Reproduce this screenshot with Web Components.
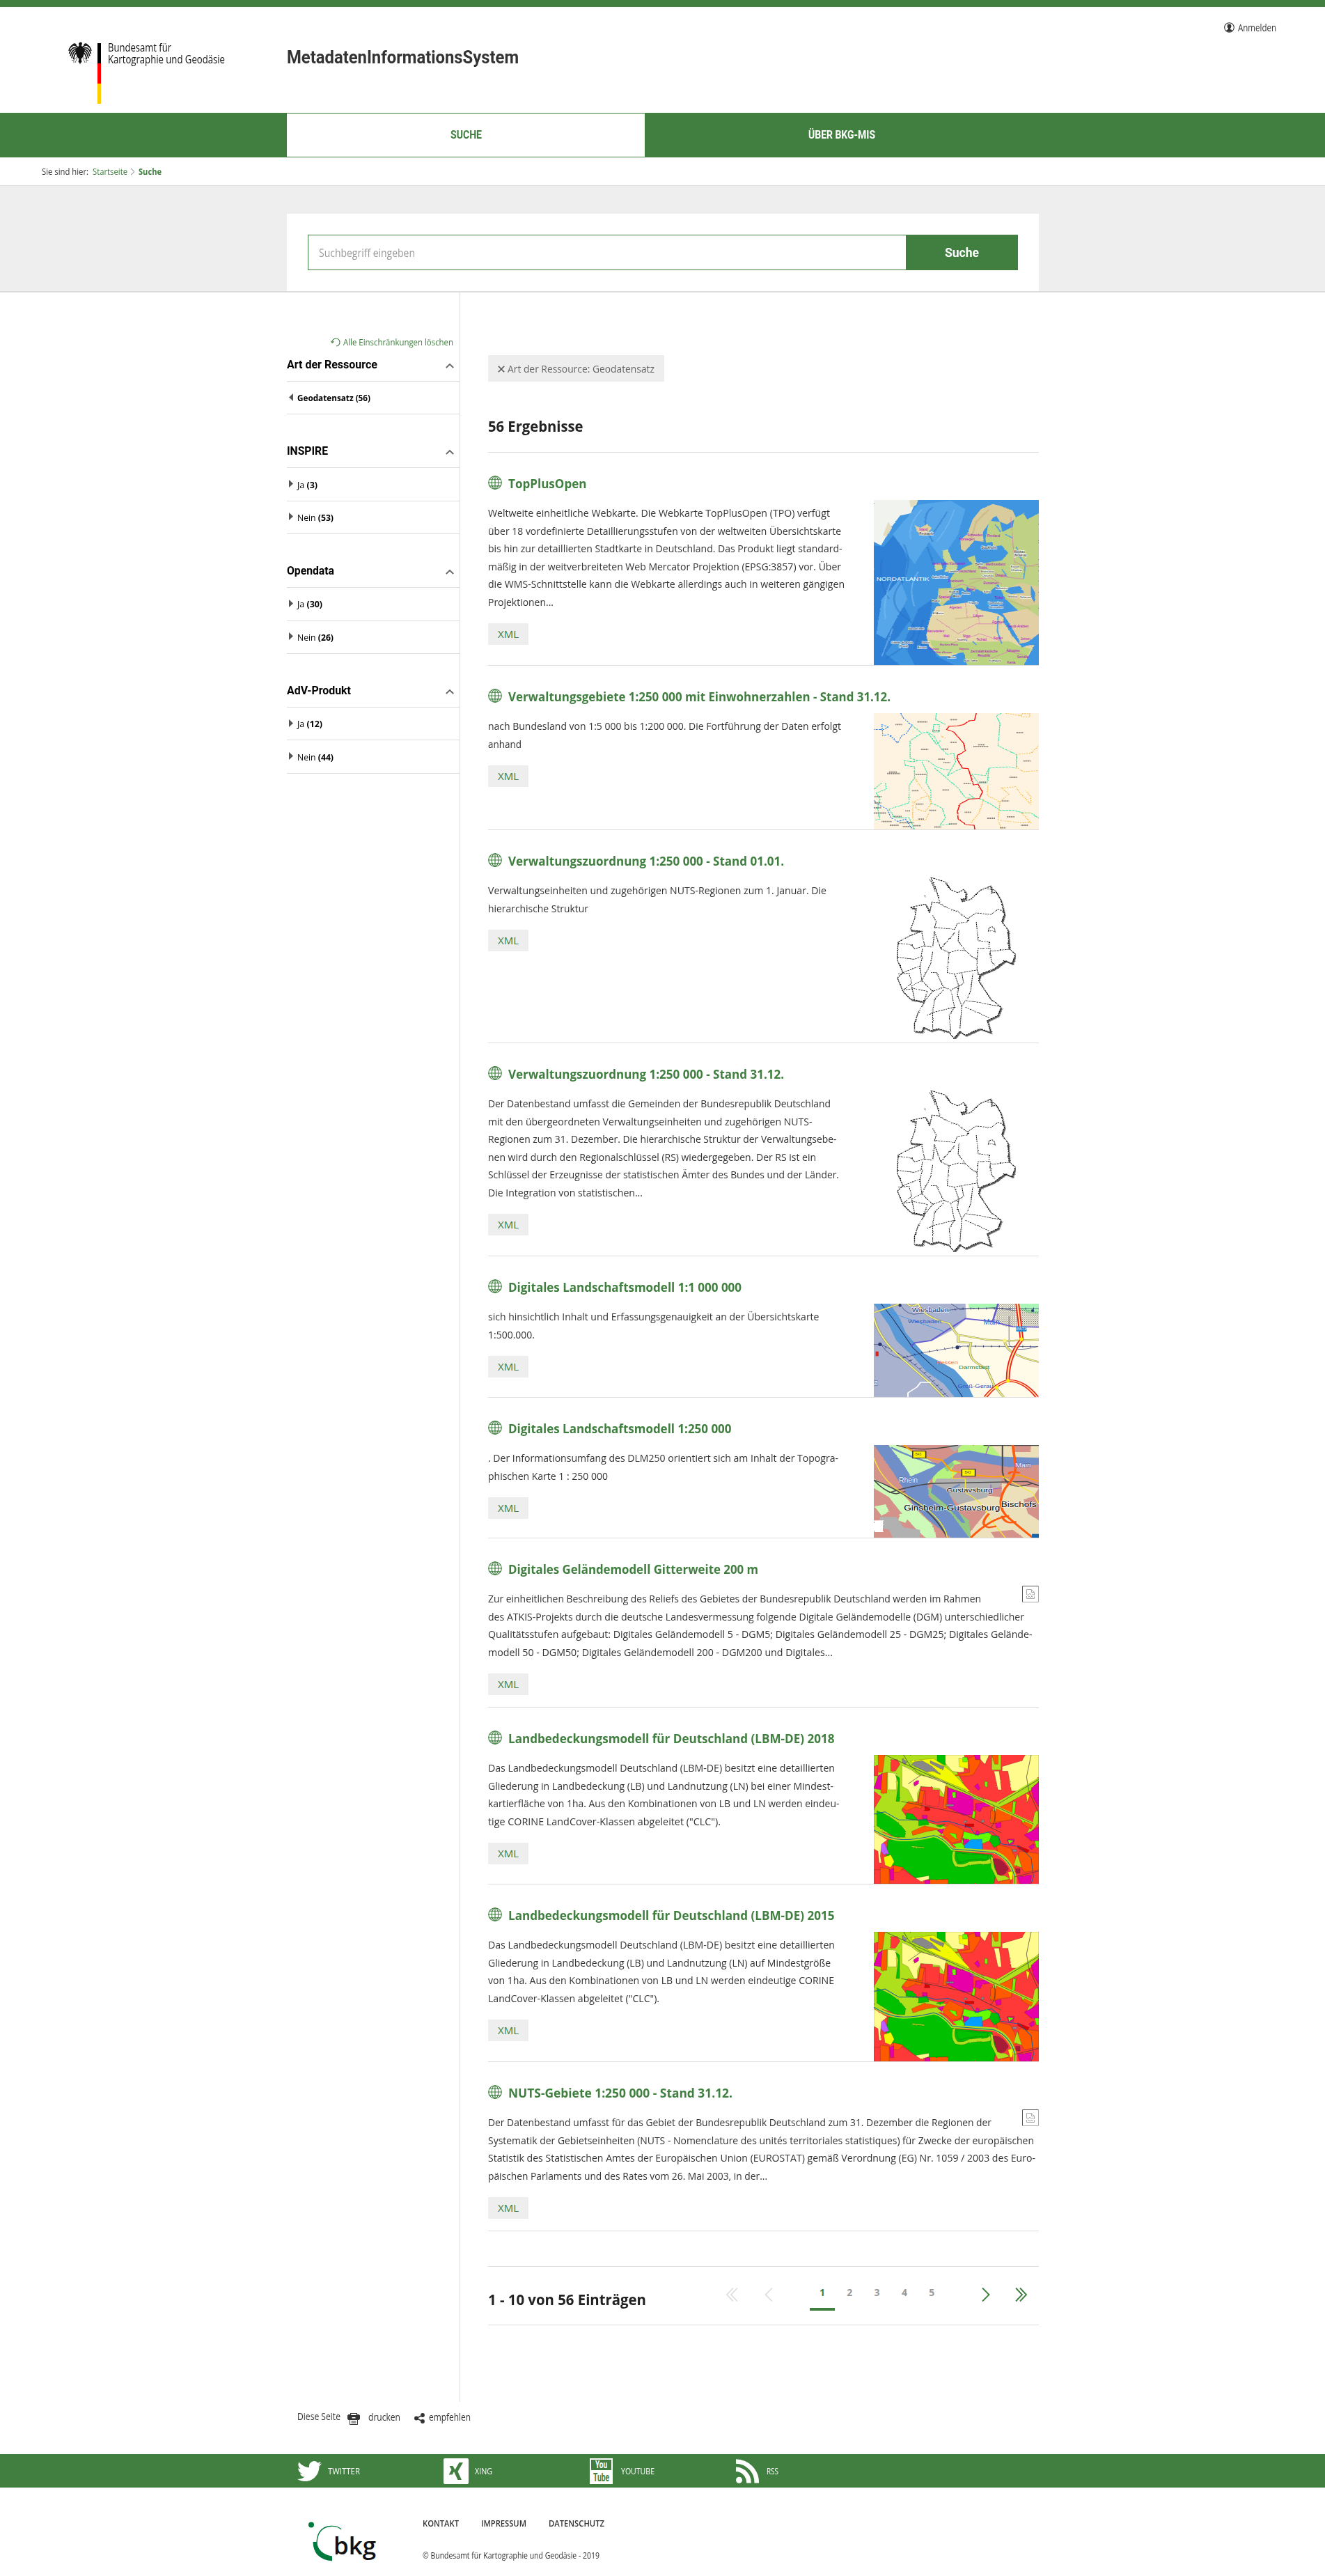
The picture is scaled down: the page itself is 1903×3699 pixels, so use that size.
<!DOCTYPE html>
<html lang="de">
<head>
<meta charset="utf-8">
<title>MetadatenInformationsSystem</title>
<style>
html,body{margin:0;background:#fff}
body{font-family:"Open Sans","Noto Sans",sans-serif;font-size:15px;color:#333;--green:#407f40;--line:#ddd}
</style>
</head>
<body>
<mis-page></mis-page>
<script>
const define = (name, html, init) => {
  const t = document.createElement('template');
  t.innerHTML = html;
  customElements.define(name, class extends HTMLElement {
    connectedCallback() {
      if (this.shadowRoot) return;
      const r = this.attachShadow({mode: 'open'});
      r.append(t.content.cloneNode(true));
      if (init) init(this, r);
    }
  });
};

/* ---------- map thumbnails ---------- */
const germany = `<g fill="#fff" stroke="#111" stroke-width="2.6" stroke-dasharray="5 2.2" filter="url(#rough)">
<path filter="url(#sh)" d="M1235 133L1275 150 1290 180 1310 190 1325 178 1332 192 1330 212 1318 214 1322 224 1345 215 1370 182 1400 165 1402 192 1415 188 1428 220 1437 270 1430 300 1447 330 1450 400 1467 420 1459 457 1440 445 1410 475 1370 497 1366 520 1380 550 1400 590 1428 620 1420 650 1390 670 1400 715 1370 700 1330 725 1315 710 1298 737 1285 712 1255 700 1235 708 1215 695 1210 712 1190 710 1190 680 1200 640 1218 600 1180 590 1158 560 1143 510 1158 490 1142 440 1145 375 1180 350 1210 335 1178 330 1190 290 1195 250 1178 245 1220 233 1232 262 1238 225 1260 228 1250 180Z"/>
<g fill="none" stroke-width="2"><path d="M1255 228L1285 250 1310 262 1335 288 1360 266 1400 272 1420 252 1437 262M1240 275L1250 300 1245 320 1300 328 1308 305 1335 300 1340 288M1360 300L1365 370 1395 375 1395 398 1365 400 1362 440 1350 432 1330 408 1310 372 1312 330M1210 340L1218 390 1240 395 1245 335 1262 400 1285 365 1300 340M1145 380L1180 385 1190 400 1220 390M1142 432L1190 440 1208 430 1212 400M1158 490L1205 465 1212 430M1262 400L1285 415 1310 405 1330 408M1240 412L1235 455 1210 520 1240 560 1270 545 1250 490 1235 490M1285 415L1280 490 1300 495 1320 490 1362 480 1362 440M1362 480L1368 500M1395 398L1402 410 1450 402M1398 410L1402 450 1412 465M1300 495L1312 540 1290 555 1270 545M1320 490L1325 530 1312 540 1308 575 1320 615 1330 595 1360 600 1428 618M1350 495L1345 555 1335 590M1240 560L1215 602M1270 555L1245 590 1240 640 1225 650M1290 555L1300 620 1240 640 1240 700M1300 620L1285 650 1290 712M1320 615L1315 700M1330 620L1365 640 1395 660M1145 495L1175 492 1182 530 1160 555 1188 550 1225 560 1215 602M1205 465L1210 520 1182 540 1190 590M1393 335L1395 322 1403 317 1410 325 1412 337 1402 333ZM1275 155L1290 180M1232 140L1240 160 1248 190M1390 175L1410 180 1420 200M1218 200L1220 208"/></g></g>`;
const MAPS = {
top: {h: 237, sy: .357, y0: 162, svg: `<rect x="1078" y="162" width="454" height="664" fill="#3f95e0"/>
<g filter="url(#rough)">
<path fill="#2f7fd6" d="M1078 345L1105 350 1140 290 1170 400 1150 560 1180 640 1110 780 1150 826H1078ZM1200 600L1240 560 1225 700 1250 790 1300 826H1190L1160 740Z"/><path fill="#56a6ea" d="M1130 300L1200 180 1290 165 1330 200 1310 300 1265 400 1230 330 1190 420ZM1100 560L1150 480 1170 560 1110 720 1085 700Z"/>
<path fill="none" stroke="#2a74c8" stroke-width="5" opacity=".5" d="M1160 340Q1190 420 1150 500T1170 640 1110 800M1240 190Q1200 230 1240 330M1280 210l-40 90M1225 350l15 60M1100 400q-10 100 20 160M1215 640l-25 120"/><path fill="none" stroke="#7dbdf0" stroke-width="4" opacity=".6" d="M1210 200q-40 60-30 120M1300 200q-20 80-50 130M1130 480q-30 80-20 160M1200 450q-30 60-10 140M1130 680l-30 110"/>
<path fill="#f1f3ef" d="M1078 162H1195L1180 215 1150 225 1125 275 1098 345 1078 330Z"/><path fill="#e3dcbf" d="M1175 162h25l-5 20-15 10ZM1118 250l10 25-15 35-10-5 8-30Z"/>
<path fill="#dccfa0" d="M1190 262L1205 275 1225 258 1237 275 1230 290 1212 302 1198 290Z"/>
<path fill="#d8cc9c" d="M1318 360L1316 320 1335 300 1350 240 1372 200 1405 178 1425 185 1460 205 1470 235 1445 260 1425 250 1415 225 1405 235 1378 290 1380 330 1355 325 1340 350 1328 370Z"/>
<path fill="#bed184" d="M1532 162V630L1500 640 1440 560 1420 500 1390 540 1360 520 1345 545 1320 515 1300 520 1285 560 1265 590 1252 570 1256 518 1292 515 1288 480 1300 455 1330 430 1350 420 1335 395 1355 385 1362 420 1430 405 1448 375 1430 345 1390 350 1385 320 1395 245 1425 250 1432 290 1460 270 1465 235 1490 215 1500 240 1532 215Z"/>
<path fill="#c9d792" d="M1268 365L1282 360 1292 400 1310 425 1305 445 1272 452 1280 420 1268 395ZM1245 420l18-6 4 25-20 10Z"/>
<path fill="#e5d7a8" d="M1250 590L1350 572 1362 600 1420 620 1440 640 1455 700 1480 745 1520 745 1490 826H1335L1325 770 1290 790 1260 790 1230 750 1222 705 1232 640Z"/><path fill="#b9d37e" d="M1228 725L1330 735 1450 730 1478 750 1510 760 1490 826H1335L1325 775 1255 785Z"/><path fill="#e2cfa4" d="M1432 618L1500 600 1532 630V700L1500 735 1482 742 1445 665Z"/><path fill="#d9cb98" d="M1440 520l40-25 52 15v70l-40 10-40-35ZM1260 525l30 0-5 40-20 10Z"/>
<path fill="#3f95e0" d="M1446 515L1480 508 1492 535 1455 540 1440 530ZM1510 505l12 30-2 40-10-25ZM1435 625l10 20 35 85-5 5-40-80ZM1378 338l25-8 4 15-22 15ZM1480 740l50-15v10l-45 20ZM1335 510l25 30 12 30-8 10-18-30-15-25ZM1395 545l20 40 25 10-8 25-60-15 12-30Z"/>
<path fill="none" stroke="#57a6df" stroke-width="4" d="M1440 300l20 15M1412 260l15 30M1470 350l10 40 15 30-5 60M1430 440l15 30M1350 730l10 15M1420 630l-2 60 12 50"/><path fill="none" stroke="#d874b7" stroke-width="1.6" d="M1250 640L1310 700 1360 660 1430 660M1330 575l5 60M1360 600l10 60M1290 520l30-20 40 15M1340 480l60-5 30 25M1380 430l50 40 60 10M1455 230l10 180 30 20 37-10M1290 740l80-40 60 30M1400 800l50-30 50 20"/>
<path fill="none" stroke="#c4b27e" stroke-width="5" opacity=".6" d="M1345 320l15-70 35-50M1340 500l40-20M1440 560l70 40M1300 640l70-10M1460 420l60 10M1270 560l30-20"/></g>`,
labels: [[1085,486,'NORDATLANTIK','#fff',7.2,76],[1203,284,'Island','#b000c8',4.5],[1203,303,'Reykjavík','#222',4.5],[1335,307,'Schweden','#b000c8',4.8],[1313,323,'Norwegen','#b000c8',4.8],[1390,311,'Finnland','#b000c8',4.8],[1373,357,'Stockholm','#222',4.8],[1463,374,'Moskau','#222',4.5],[1463,388,'(Moskva)','#222',4.5],[1238,422,'Vereinigtes Königreich','#b000c8',4.6,48],[1357,426,'Berlin','#222',4.6],[1386,426,'Weißrussland','#b000c8',4.6],[1366,440,'Polen','#b000c8',4.6],[1310,453,'Deutschland','#b000c8',4.6],[1372,453,'Bratislava','#222',4.4],[1283,453,'London','#222',4.4],[1238,476,'Saint Helier','#222',4.4],[1283,493,'Frankreich','#b000c8',4.6],[1375,469,'Chișinău','#222',4.4],[1412,469,'Ukraine','#b000c8',4.6],[1380,500,'Rumänien','#b000c8',4.6],[1334,526,'Italien','#b000c8',4.6],[1256,557,'Spanien','#b000c8',4.6],[1284,535,'Madrid','#222',4.4],[1296,551,'Algier','#222',4.4],[1320,541,'Roma','#222',4.4],[1413,520,'Bukarest','#222',4.4],[1380,535,'Sofia','#222',4.4],[1410,559,'Türkei','#b000c8',4.6],[1446,555,'Nikosia','#222',4.4],[1480,558,'Teheran','#222',4.4],[1455,434,'Kasan','#222',4.4],[1455,448,'Charkiw','#222',4.4],[1392,579,'Damaskus','#222',4.4],[1395,595,'Jerusalem','#222',4.4],[1338,579,'Tripolis','#222',4.4],[1238,571,'Rabat','#222',4.4],[1286,600,'Algerien','#b000c8',4.8],[1352,633,'Libyen','#b000c8',4.8],[1240,622,'El Aaiún','#222',4.4],[1403,657,'Ägypten','#b000c8',4.8],[1446,675,'Saudi-Arabien','#b000c8',4.8],[1173,684,'Nouakchott','#222',4.4],[1223,695,'Mauretanien','#b000c8',4.6],[1270,713,'Mali','#b000c8',4.6],[1323,713,'Niger','#b000c8',4.6],[1360,727,'Tschad','#b000c8',4.6],[1407,722,'Sudan','#b000c8',4.6],[1482,724,'Jemen','#b000c8',4.6],[1307,729,'Niamey','#222',4.4],[1125,738,'Cidade da Praia','#222',4.4],[1210,738,'Dakar','#222',4.4],[1147,754,'(Praia)','#222',4.4],[1198,758,'Bissau','#222',4.4],[1260,748,'Burkina Faso','#b000c8',4.4],[1230,763,'Guinea','#b000c8',4.4],[1245,778,"Côte d’Ivoire",'#b000c8',4.4],[1313,765,'Nigeria','#b000c8',4.4],[1344,776,'Zentralafrikanische','#b000c8',4.6,39],[1364,793,'Republik','#b000c8',4.6],[1443,772,'Äthiopien','#b000c8',4.6],[1472,797,'Somalia','#b000c8',4.6],[1282,798,'Accra','#222',4.4],[1326,811,'São Tomé','#222',4.4],[1395,811,'Kampala','#222',4.4],[1445,820,'Kenia','#b000c8',4.6]]},
vg: {h: 167, sy: .357, y0: 1019, svg: `<rect x="1078" y="1019" width="454" height="468" fill="#fef3e0"/><g fill="none" filter="url(#rough)">
<path stroke="#2a7de6" stroke-width="2.5" stroke-dasharray="6 3" d="M1152 1019L1160 1040 1183 1068 1168 1100 1155 1110 1143 1138 1120 1105 1103 1110 1100 1065 1118 1075 1105 1085 1078 1085M1078 1370L1088 1385 1115 1405 1125 1440 1145 1455 1165 1445 1185 1487"/>
<path stroke="#3fe2b0" stroke-width="2.6" stroke-dasharray="7 2" d="M1183 1068L1210 1100 1225 1095 1243 1110 1262 1160 1280 1185 1298 1180 1303 1215 1290 1248 1270 1245 1250 1235 1225 1208 1200 1210 1178 1200 1178 1130 1210 1100M1243 1065H1258V1095H1240ZM1200 1210L1185 1215 1162 1210 1165 1230 1190 1235 1190 1280 1175 1310 1175 1380 1120 1405 1135 1440 1175 1440 1190 1487M1210 1215L1225 1260 1222 1300 1235 1330 1235 1380 1265 1400 1275 1440 1260 1470 1290 1465M1245 1240L1270 1270 1285 1290 1310 1320 1330 1360 1355 1362 1340 1345M1290 1248L1280 1270 1320 1240M1365 1300L1348 1265 1385 1270 1395 1240 1450 1235 1470 1240 1470 1185 1440 1165 1420 1150 1425 1060 1415 1030 1430 1019M1250 1019L1248 1045 1275 1065M1368 1362L1400 1385 1425 1410 1460 1410 1490 1420 1510 1420 1532 1442M1110 1300L1112 1325 1085 1340 1095 1365 1088 1400 1095 1445 1080 1450M1078 1325L1100 1300M1395 1240L1390 1300 1365 1300M1225 1095L1250 1145 1262 1130"/>
<path stroke="#f4b942" stroke-width="2.5" stroke-dasharray="4 3" d="M1190 1280L1210 1320 1228 1350 1210 1360 1190 1375 1195 1405 1220 1415 1235 1385 1228 1350M1185 1375L1185 1450 1220 1450 1230 1420M1470 1185L1510 1180 1532 1150M1470 1235L1490 1255 1532 1250M1392 1310L1390 1350 1425 1375 1450 1345 1430 1320 1468 1315 1480 1340 1510 1385 1510 1355 1495 1330M1380 1365L1368 1420 1345 1460M1425 1375L1420 1450 1430 1487M1425 1450L1480 1460 1510 1460 1485 1420 1510 1420M1440 1019L1485 1030M1485 1021h22v13h-22zM1275 1120L1262 1110"/>
<path stroke="#f01818" stroke-width="3" d="M1360 1019L1355 1048 1340 1050 1325 1065 1310 1070 1285 1072 1278 1085 1298 1095 1310 1115 1325 1140 1330 1170 1308 1190 1308 1205 1322 1240 1338 1242 1345 1275 1352 1308 1365 1305 1377 1337 1368 1362 1340 1365 1315 1385 1308 1415 1310 1445 1332 1468 1354 1470 1356 1487"/></g>
<g fill="none" stroke="#333" stroke-width="5" stroke-dasharray="1.5 1.3" opacity=".8"><path d="M1138 1065h18M1198 1054h28M1288 1045h20M1240 1090h20M1288 1136h18M1208 1165h20M1265 1164h18M1255 1204h18M1270 1218h18M1365 1146h18M1352 1153h42M1470 1098h20M1490 1211h20M1120 1256h22M1115 1262h36M1193 1266h30M1325 1302h20M1368 1297h20M1183 1331h18M1267 1328h18M1452 1277h20M1195 1385h20M1430 1372h20M1165 1412h14M1230 1410h20M1328 1418h18M1390 1442h22M1444 1436h22M1078 1400h20M1078 1421h34M1133 1435h22M1100 1455h28M1122 1470h24M1148 1460h40M1158 1475h22M1200 1445h16M1186 1472h22M1245 1477h18M1285 1465h22M1483 1470h20M1425 1480h16M1080 1355h20M1080 1380h18"/></g>`, labels: []},
de: {h: 237, sy: .3827, y0: 133, svg: germany, labels: []},
dlm1000: {h: 134, sy: .3333, y0: 186, svg: `<rect x="1078" y="186" width="454" height="402" fill="#fffbe8"/><path fill="#a9b3cf" d="M1078 186H1330L1333 250 1300 295 1240 345 1185 357 1250 460 1350 588H1078Z"/><path fill="#a8f5b6" d="M1338 186H1532V270L1490 215 1415 210 1395 205 1340 205Z"/><path fill="#fffbe8" d="M1415 186H1468L1475 220 1532 230V290H1440L1412 265Z"/><path fill="url(#dots)" d="M1415 186H1468L1475 205 1532 220V285H1440L1412 265Z"/>
<path fill="#5899d6" d="M1078 186H1122L1150 250 1165 310 1215 400 1265 440 1300 470 1335 530 1352 588H1300L1270 530 1220 475 1190 420 1140 345 1120 280Z"/>
<g fill="none"><path stroke="#202a55" stroke-width="2" d="M1098 186L1130 250 1185 375 1250 470 1290 510 1322 588"/><path stroke="#3d94ec" stroke-width="2" d="M1125 225L1270 305M1130 230L1140 222"/><path stroke="#6158d0" stroke-width="5" d="M1180 370L1190 355 1235 345 1290 290 1330 250 1400 262 1460 285 1532 287M1405 262L1420 186"/>
<path stroke="#26316d" stroke-width="1.5" d="M1078 362h20q30 20 70 60 50 60 115 166M1098 362q20 50 55 60l60-25 110-28 206 2M1150 190q20 50 50 40l80-15 40-8h212M1290 186l25 25 40-5M1350 208l60-5 65 15M1450 240v120q10 40 80 10"/><path stroke="#26316d" stroke-width="9" stroke-dasharray="1.6 20" d="M1150 422l60-25 110-28 206 2M1280 215l40-8h212M1180 430q50 60 100 158M1110 375q30 20 70 60"/>
<g stroke="#8d8f74" stroke-width="7"><path d="M1078 225L1150 186M1078 245Q1090 330 1150 415L1230 525 1270 588M1170 186q10 20 30 0q15 60 85 85l22 48 80 22 60 5 85-5M1310 320v30l35 5q-10 60 15 85l30 30 20 70 25 48M1438 345q0 60 94 92"/></g><g stroke="#f5f17e" stroke-width="4"><path d="M1078 225L1150 186M1078 245Q1090 330 1150 415L1230 525 1270 588M1170 186q10 20 30 0q15 60 85 85l22 48 80 22 60 5 85-5M1310 320v30l35 5q-10 60 15 85l30 30 20 70 25 48M1438 345q0 60 94 92"/></g><path stroke="#fff" stroke-width="4" d="M1235 525h-28l-10 20-25 25v18"/>
<path stroke="#f11b1b" stroke-width="11" d="M1473 186L1485 340Q1445 420 1447 518Q1415 530 1385 588M1447 518Q1490 515 1527 588"/><path stroke="#ffe99c" stroke-width="4" d="M1473 186L1485 340Q1445 420 1447 518Q1415 530 1385 588M1447 518Q1490 515 1527 588"/></g>
<g fill="#fff200"><ellipse cx="1484" cy="339" rx="5" ry="8"/><ellipse cx="1447" cy="518" rx="5" ry="8"/><ellipse cx="1416" cy="547" rx="5" ry="8"/><ellipse cx="1438" cy="345" rx="5" ry="8" fill="#f8f27c"/></g><g fill="#2b376f"><ellipse cx="1150" cy="193" rx="4" ry="7"/><ellipse cx="1095" cy="361" rx="5" ry="8"/><ellipse cx="1308" cy="374" rx="5" ry="8"/><ellipse cx="1515" cy="216" rx="4" ry="6"/></g><rect x="1470" y="284" width="28" height="22" fill="#159af0"/><path fill="#d22" d="M1083 392h8v20h-8z"/>`,
labels: [[1183,223,'Wiesbaden','#26316d',8.8,53,1],[1172,269,'Wiesbaden','#2c55c4',8,48],[1380,277,'Main','#3465d6',10,23],[1471,301,'A671','#fff',5.5,14],[1250,448,'Hessen','#ee7a4b',7.6,31],[1312,468,'Darmstadt','#2a7f3c',7.6,44],[1309,549,'Groß-Gerau','#3a50c0',7.4,51],[1078,536,'Z','#fff',9]]},
dlm250: {h: 133, sy: .3333, y0: 795, svg: `<rect x="1078" y="795" width="454" height="399" fill="#d4928a"/><g filter="url(#rough)">
<path fill="#cdfab8" d="M1090 795H1150L1230 860 1250 880 1230 960 1180 940 1130 850ZM1078 940L1130 980 1160 1010 1200 1080 1240 1140 1250 1194H1220L1190 1150 1150 1080 1120 1020 1078 980ZM1080 1060l30-10 10 30-20 20ZM1150 1090l25 10-10 30-20-10Z"/><path fill="#b7f47f" d="M1310 795H1425L1430 850 1360 830 1310 830ZM1240 905L1300 860 1330 880 1290 940 1320 960 1240 960Z"/>
<path fill="#ece0ba" d="M1400 795H1532V850L1430 850ZM1300 1060L1380 1010 1430 1020 1430 960 1532 980 1500 1060 1532 1090V1194H1330L1390 1080Z"/>
<path fill="#b1b1b1" d="M1250 940L1430 940 1425 975 1400 985 1390 1020 1310 1050 1285 1010 1260 1000 1245 960ZM1280 795H1320L1300 825ZM1095 1105H1140L1160 1150 1205 1160V1194H1130L1120 1160 1090 1150Z"/>
<path fill="#d4928a" d="M1155 800L1270 800 1270 830 1250 870 1220 850ZM1300 880L1350 865 1430 870 1430 935 1360 925 1290 905ZM1460 795h50v30h-50zM1450 880L1532 900V960L1445 930ZM1490 1030l42-20v110l-30-30ZM1400 1170l60-10 30 34h-80ZM1330 1070l50 10-40 50Z"/>
<path fill="#fff" d="M1078 1120h25v50h-25zM1150 940h20v12h-20z"/><path fill="#92c883" d="M1210 970L1270 1000 1300 1070 1340 1120 1345 1194H1325L1290 1100 1240 1030ZM1290 860l10 20-20 30-10-20Z"/>
<path fill="#6f8fc9" d="M1078 795H1118L1160 880 1180 930 1240 890 1300 830 1340 818 1430 845 1532 850V880L1450 890 1340 862 1300 860 1255 910 1225 960 1230 1020 1290 1090 1340 1194H1290L1230 1120 1190 1060 1150 960 1130 910ZM1240 960L1280 990 1310 1080 1330 1130 1320 1130 1275 1050 1235 1000Z"/></g>
<g fill="none"><path stroke="#6f8fc9" stroke-width="7" d="M1125 805Q1180 850 1255 880M1315 965Q1250 1010 1300 1080"/><path stroke="#484848" stroke-width="4" d="M1120 1000Q1180 970 1240 960L1500 952 1532 970M1078 945Q1150 990 1190 1040 1250 1100 1280 1194M1078 945Q1110 1000 1140 1005L1165 995M1140 795Q1200 830 1310 795M1380 797h152M1432 795V910Q1440 1000 1515 960"/><path stroke="#f2e83a" stroke-width="3" d="M1078 850Q1100 950 1160 1005 1270 1100 1280 1194M1330 940V1000Q1380 1040 1395 1110L1440 1194M1430 930Q1500 990 1515 1000L1532 1050M1295 905v35h35"/><path stroke="#ffa500" stroke-width="5" d="M1160 795L1200 840 1265 860 1290 905Q1370 930 1410 932L1480 925 1532 952"/><path stroke="#ff5a0d" stroke-width="7" d="M1460 795L1468 880Q1470 930 1440 980 1410 1060 1450 1110L1480 1150 1515 1194M1345 1194Q1400 1110 1450 1100M1430 1100q10 40 40 25M1395 1090q-30 50 0 60l20-5M1450 920q0-15 30-5"/><path stroke="#9b69be" stroke-width="3" d="M1395 795l-10 45M1400 965v20l30-5"/></g><path fill="#fff300" stroke="#333" stroke-width="3" d="M1185 821h36v30h-36zM1320 899h37v30h-37z"/><path fill="#1565ac" d="M1513 1178h19v16h-19z"/>`,
labels: [[1192,841,'B43','#553',5],[1328,919,'B43','#553',5],[1468,892,'Main','#fff',9.5,22],[1147,957,'Rhein','#fff',10,27],[1278,998,'Gustavsburg','#111',9.5,66,1],[1161,1077,'Ginsheim-Gustavsburg','#000',10.8,138,1],[1428,1061,'Bischofs','#000',10.8,51,1]]},
lbm: {h: 185, sx: .3333, sy: .3333, x0: 12, y0: 15, svg: `<rect x="12" y="15" width="711" height="555" fill="#ff3838"/>
<g filter="url(#fine)" stroke="#222" stroke-opacity=".55" stroke-width="1.3">
<path fill="#aee01e" d="M12 15H330L420 180 540 220 720 118V150L560 240 525 310 512 300 530 235 400 180 330 155 325 200 290 190 215 150 200 215 130 250 160 290 240 305 350 330 330 370 300 360 150 380 12 335V250L45 195 12 170ZM520 15H560V80H520ZM705 262l15-10v60l-40 45-8-5 25-50Z"/>
<path fill="#fffb8c" d="M133 60L175 80 200 100 300 120 325 135 315 190 295 160 215 150 200 180 200 215 185 215 160 165 133 150ZM72 90L110 95V165H72ZM290 15H403L400 88 380 90 350 85ZM565 65L650 40 665 15H723V110L650 170H605L590 85 565 85ZM465 15h45l-20 40-18-20ZM530 85h22l10 80h-15Z"/>
<path fill="#ff3838" d="M215 153h50v12h30v50l-5 25-55-10v-60h-20ZM85 35h28l12 20-20 30h-20ZM12 60h18v45h-18Z"/>
<path fill="#ff5a00" d="M30 15H60L50 90H32ZM45 95L70 90 68 180 42 180ZM135 245L160 215 220 225 215 245 190 240 155 255ZM345 105L425 90 420 30 455 15H470V50L440 100 420 105ZM320 150h10l-5 95h-15ZM210 170h20l-10 55h-15ZM540 245L610 215 605 295 530 305ZM650 300L700 310 690 335 650 310ZM305 345L340 310 400 340 385 385 350 395 315 365ZM175 345L230 320 300 335 240 345 180 362ZM540 400L600 415 640 490 615 500 570 460 545 430ZM640 430L723 440V510L660 520 630 470ZM435 255h15v32h-18ZM520 15h28v40h-15ZM515 255h20v55h-20Z"/>
<path fill="#e700a8" d="M30 105L48 95 42 165 12 160ZM330 155L440 195 440 270 400 275 330 240ZM445 150l15-12 10 20-8 10ZM445 15h25v20h-20ZM183 135l18-12 5 15-18 12ZM690 160L723 130V240L700 200ZM450 225L500 220 512 235 480 240 470 260 450 250ZM535 310l25-5v22l-20 3ZM285 340l30-8-10 25ZM660 360L723 325V390L690 385ZM588 378h30l-5 20-20 5ZM680 410l20-12 5 15-15 10ZM220 275h22v15h-20Z"/>
<path fill="#00c000" d="M25 255Q90 280 130 320L150 345 145 370 100 368 25 320ZM72 380Q180 385 280 362 330 400 360 430L520 445 540 500 530 570H330L250 552 190 545 140 505 90 490 65 450 70 410ZM285 15h35v45l-35-20ZM105 100l18 15v100h-15l10-80ZM510 360l40 5 5 35-25 15-20-30ZM205 295l35-5 10 25-45 5ZM280 320l40-8-20 15ZM150 265l30 5 20 25-50-5Z"/>
<path fill="#aee01e" d="M352 430h12q-10 30 8 55 30 5 50-10l50-5q30 5 40-10l10 20q-30 10-50 5l-50 5q-30 15-60 5-20-25-10-65ZM175 407l55 6v5l-55-6ZM615 490l15-50 20 60ZM515 450l12 10q0 60 30 75l20 0 25 15-55 10-30-60Z"/><path fill="#00c000" d="M366 438L505 448 500 466 470 464 420 468 378 480Z"/>
<path fill="#f2f900" d="M170 40L270 30 345 85 430 175 300 120 250 95 180 50ZM55 455L85 445 100 475 85 500 60 490ZM378 30l40 5v40l-38-10ZM590 520l20-5v35l-10 5ZM668 180l15 10-10 30Z"/>
<path fill="#888" d="M185 45L220 40 265 65 300 100 265 85 240 88 175 58ZM255 40l60 25-5 15-55-30ZM135 30l20 15-8 12-12-10ZM425 205l25-12 35 10-5 12-40-12ZM322 228h35v8h-35ZM402 296l12 3-4 8h-10ZM475 295h12v10h-12ZM610 422h18v10h-18Z"/>
<path fill="#66ff00" d="M395 25h20v20h-20zM440 255l10 5-5 30-10-5ZM612 215h12l-5 50-12 5ZM350 175h15v25h-15ZM400 345l60 15 40-15 20 15-10 25-50 20-70-10ZM335 350l30 5 5 25-20-15ZM490 130h12v25l-12-5ZM705 385h18v30h-10ZM350 400l40-8 15 20-20 15ZM590 380l25 5-20 15ZM640 280l25 15-10 15Z"/>
<path fill="#e700a8" d="M395 375l28 5-5 17h-20ZM455 340l12 5-5 18-12-8Z"/>
<path fill="#ff3838" d="M12 510H140L190 545 250 555 330 550V570H12Z"/><path fill="#ff5a00" d="M40 500L78 505V570H40ZM97 490L140 500 120 520 97 520ZM250 552H333V570H255ZM550 565l50-15v20h-50Z"/><path fill="#e700a8" d="M80 510l18-6v50h-15ZM632 540l60-8-5 38h-45ZM232 555h22v15h-22Z"/>
<path fill="#009fff" d="M400 405L430 380 478 378 480 422 405 420Z"/><path fill="#a61c39" d="M525 465Q560 450 592 505 580 540 545 530ZM622 505h20v20h-15Z"/><path fill="#be5cff" d="M45 388L60 400 78 440 55 445 38 425Z"/><path fill="#e10000" d="M405 312h38v12h-38zM632 405l50 20-8 12-42-20ZM232 238l20 5v12h-20Z"/><path fill="#fffb8c" d="M12 345L70 380 45 400 40 450 45 480 35 480 30 430 12 420ZM192 545l58-10v15l-35 10Z"/></g>
<g fill="none"><path stroke="#aee01e" stroke-width="14" d="M12 335Q80 380 140 380T270 362Q310 370 350 420L530 432Q600 460 620 540V570"/><path stroke="#135da0" stroke-width="3" d="M12 338Q80 380 140 380T270 362Q310 370 350 420L530 435Q600 460 620 540V570M12 270L60 260 120 295 240 295 280 305 330 300 400 320 430 330 450 360 520 345 550 370 560 398 640 410 690 460 700 540 690 570"/><path stroke="#aee01e" stroke-width="11" d="M400 170L530 235 700 312M540 228L723 118"/><path stroke="#333" stroke-width="2" d="M60 15L160 60 430 185 540 238 700 312M140 15Q180 90 230 105T330 140M690 15L670 110 680 170 720 260M160 140L200 112 215 102M130 215L400 270 560 350M550 225L723 120M620 540L723 515M530 235Q545 300 515 330"/></g>`, labels: []}
};
define('map-thumb', `<style>:host{display:block;width:237px;overflow:hidden}svg{display:block;width:237px}text{font-family:"Liberation Sans",sans-serif;font-weight:400}</style><div></div>`, (el, r) => {
  const m = MAPS[el.getAttribute('kind')], sx = m.sx || .522, x0 = m.x0 || 1078, h = +el.getAttribute('height') || m.h;
  const lab = m.labels.map(([x, y, s, c, z, w, halo]) =>
    `<text x="${((x - x0) * sx).toFixed(1)}" y="${((y - m.y0) * m.sy).toFixed(1)}" fill="${c}" font-size="${z}"${w ? ` textLength="${w}" lengthAdjust="spacingAndGlyphs"` : ''} ${halo || c === '#222' ? 'stroke="#fff" stroke-opacity=".75" stroke-width="1.4" paint-order="stroke"' : c === '#fff' && s.length < 6 ? 'stroke="#4969b4" stroke-width="1" paint-order="stroke"' : ''}>${s}</text>`).join('');
  r.querySelector('div').innerHTML = `<svg viewBox="0 0 237 ${m.h}" height="${h}" preserveAspectRatio="none"><defs>
  <filter id="rough" x="0" y="0" width="1" height="1"><feTurbulence type="fractalNoise" baseFrequency=".16" numOctaves="2" seed="4"/><feDisplacementMap in="SourceGraphic" scale="5" xChannelSelector="R" yChannelSelector="G"/></filter>
  <filter id="fine" x="0" y="0" width="1" height="1"><feTurbulence type="fractalNoise" baseFrequency=".09" numOctaves="2" seed="9"/><feDisplacementMap in="SourceGraphic" scale="6" xChannelSelector="R" yChannelSelector="G"/></filter>
  <filter id="sh"><feDropShadow dx="3" dy="5" stdDeviation="1.4" flood-color="#000" flood-opacity=".65"/></filter>
  <pattern id="dots" width="6" height="8" patternUnits="userSpaceOnUse"><path d="M1 1h2v3h-2zM4 5h2v3h-2z" fill="#333"/></pattern></defs>
  <g transform="scale(${sx} ${m.sy}) translate(${-x0} ${-m.y0})">${m.svg}</g>${lab}</svg>`;
});

/* ---------- icons ---------- */
const ICONS = {
globe: [20,20,'<g fill="none" stroke="#407f40" stroke-width="1.15"><circle cx="10" cy="10" r="9.3"/><ellipse cx="10" cy="10" rx="4.8" ry="9.3"/><path d="M10 .8v18.4M.8 10h18.4M2.2 5.2h15.6M2.2 14.8h15.6"/></g>'],
user: [15,15,'<circle cx="7.5" cy="7.5" r="6.8" fill="#fff" stroke="#333" stroke-width="1.1"/><path fill="#333" d="M7.5 2.6c2 0 2.9 1.3 2.9 3 0 1.500-.6 2.600-1.400 3.200v1.200l2.900 1.300c-1 1.600-2.600 2.500-4.400 2.500s-3.400-.9-4.400-2.500l2.900-1.300v-1.200c-.8-.6-1.400-1.700-1.400-3.200 0-1.700.9-3 2.900-3z"/>'],
reset: [14,13,'<g fill="none" stroke="#407f40" stroke-width="1.1"><path d="M2 6.500A5.500 5.500 0 1 1 8 12"/><path d="M.3 4.500L2 7.200 4.800 5.300"/></g>'],
up: [12,8,'<path d="M.8 7L6 2l5.200 5" fill="none" stroke="#666" stroke-width="1.900"/>'],
tl: [6,11,'<path d="M6 0v11L0 5.500z" fill="#555"/>'],
tr: [6,11,'<path d="M0 0v11l6-5.500z" fill="#555"/>'],
x: [10,10,'<path d="M.8.8l8.400 8.400M9.200.8L.8 9.200" stroke="#555" stroke-width="1.600"/>'],
crumb: [7,11,'<path d="M1 .8l5 4.700-5 4.700" fill="none" stroke="#777"/>'],
first: [17,20,'<path d="M10 .5L1 10l9 9.500M16 .5L7 10l9 9.500" fill="none" stroke="#ddd" stroke-width="1.700"/>'],
prev: [12,20,'<path d="M11 .5L1.500 10 11 19.500" fill="none" stroke="#ddd" stroke-width="1.700"/>'],
next: [12,20,'<path d="M1 .5L10.500 10 1 19.500" fill="none" stroke="#407f40" stroke-width="1.900"/>'],
last: [17,20,'<path d="M1 .5l9 9.500-9 9.500M7 .5l9 9.500-9 9.500" fill="none" stroke="#407f40" stroke-width="1.900"/>'],
broken: [24,24,'<path d="M.5 23.500V.5h23" fill="none" stroke="#555"/><path d="M.5 23.500h23V.5" fill="none" stroke="#aaa"/><path d="M6.500 12V5.500h7l4 4V13M13.500 5.500v4h4M6.500 15v3.500h11V15.500M6 12l2.500 2 2.500-3 2.500 3 2-2 2.500 2M8 17l2-2 2 2 2-2 2 2" fill="none" stroke="#aaa"/>'],
print: [18,17,'<path fill="#333" d="M4 0h10v2h2.500L18 3.500V8.500L16.500 10H1.500L0 8.500v-5L1.500 2H4z"/><path fill="#fff" d="M5.200 1h7.600v2H5.200zM6.500 6h5v1.500h-5z"/><path fill="#fff" stroke="#333" d="M3.500 9.500h11v7h-11z"/><path stroke="#333" d="M5.500 12h7M5.500 14h7"/>'],
share: [15,15,'<g fill="#333"><circle cx="3" cy="7.500" r="3"/><circle cx="12" cy="3" r="2.900"/><circle cx="12" cy="12" r="2.900"/></g><path d="M12 3L3 7.500l9 4.500" fill="none" stroke="#333" stroke-width="1.600"/>'],
twitter: [35,29,'<path transform="scale(1.458 1.487) translate(0 -2.200)" fill="#fff" d="M23.953 4.570a10 10 0 01-2.825.775 4.958 4.958 0 002.163-2.723c-.951.555-2.005.959-3.127 1.184a4.920 4.920 0 00-8.384 4.482C7.690 8.095 4.067 6.130 1.640 3.162a4.822 4.822 0 00-.666 2.475c0 1.710.870 3.213 2.188 4.096a4.904 4.904 0 01-2.228-.616v.060a4.923 4.923 0 003.946 4.827 4.996 4.996 0 01-2.212.085 4.936 4.936 0 004.604 3.417 9.867 9.867 0 01-6.102 2.105c-.390 0-.779-.023-1.170-.067a13.995 13.995 0 007.557 2.209c9.053 0 13.998-7.496 13.998-13.985 0-.210 0-.420-.015-.630A9.935 9.935 0 0024 4.590z"/>'],
xing: [36,37,'<rect width="36" height="37" rx="2" fill="#fff"/><path fill="#407f40" d="M8.500 11h5l3 5.500-4 7H7.500l4-7zM22.500 6H28l-7.500 13L26 31h-5.500L15 19z"/>'],
youtube: [33,37,'<rect width="33" height="37" fill="#fff"/><rect x="2" y="2" width="29" height="15" fill="#407f40"/><text x="8" y="14.300" fill="#fff" font-family="Roboto" font-size="14" font-weight="700" textLength="17" lengthAdjust="spacingAndGlyphs">You</text><text x="5" y="33" fill="#407f40" font-family="Roboto" font-size="16" font-weight="700" textLength="23" lengthAdjust="spacingAndGlyphs">Tube</text>'],
rss: [33,35,'<circle cx="4.500" cy="30.300" r="4.500" fill="#fff"/><path d="M0 14.800A19 19 0 0 1 18.500 34.500M0 3.500A30 30 0 0 1 29.700 34.500" fill="none" stroke="#fff" stroke-width="6.600"/>'],
eagle: [34,33,'<g fill="none" stroke="#111" stroke-width="1.700"><path d="M15 9Q5-1 1 13M15 11Q6 4 1.500 17M15 13Q7 7 3 20.500M15 14Q8 10 5 23.500M15 16Q10 13 7.500 25M19 9q10-10 14 4M19 11q9-7 13.500 6M19 13q8-6 12 7.500M19 14q7-4 10 9.500M19 16q5-3 7.500 9"/><path d="M5 8Q6 3 9.500 3l2 1.500M29 8Q28 3 24.500 3l-2 1.500" stroke-width="1.600"/></g><path fill="#111" d="M15 2.500l2-2h2l1 2-1 3 2.500 4 2.500 2-2.500 10-3 3 1 4.500-1.500 1-1 2.500-1-2.500-1.500-1 1-4.500-3-3-2.500-10 2.500-2 3-4z"/><path d="M12 22l-4 4-3 1M8 26l0 4M13 23l-3 7M22 22l4 4 3 1M26 26l0 4M21 23l3 7" stroke="#666" fill="none"/>'],
bkg: [100,60,'<circle cx="4" cy="4.500" r="4" fill="#007a3c"/><path d="M12 38Q10 8 32 6.500 42 6 47 11" fill="none" stroke="#007a3c" stroke-width="1.300"/><path d="M6.500 29Q7 54 34 56.500V49.500Q14 46 12 29Z" fill="#007a3c"/><text x="36" y="46.500" font-family="Open Sans" font-style="normal" font-weight="600" font-size="35" textLength="61" lengthAdjust="spacingAndGlyphs" fill="#111">bkg</text>']
};
define('mis-icon', `<style>:host{display:block;flex:none}div,svg{display:block}svg{overflow:visible}</style><div></div>`, (el, r) => {
  const [w, h, s] = ICONS[el.getAttribute('name')];
  r.querySelector('div').innerHTML = `<svg width="${w}" height="${h}" viewBox="0 0 ${w} ${h}">${s}</svg>`;
});

/* ---------- header ---------- */
define('mis-header', `<style>
:host{display:block;border-top:10px solid var(--green)}
.in{height:152px;display:flex;padding-left:98px;padding-right:70px}
.logo{display:flex;padding-top:50px;width:314px;box-sizing:border-box}
.flag{width:5px;height:87px;margin:2px 10px 0 8px;background:linear-gradient(#000 0 33.300%,#f00 33.300% 66.600%,#fc0 66.600%)}
.name{font-size:16px;line-height:17px;color:#111}
.name fit-text{display:block}
h1{font:700 26px/30px Roboto,sans-serif;margin:57px 0 0;flex:1}
a{display:flex;gap:5px;align-items:center;height:20px;margin-top:19px;font-size:14px}
nav{background:var(--green);height:64px;display:flex;padding-left:412px;font:700 16px/62px Roboto,sans-serif;color:#fff;text-align:center}
nav div{box-sizing:border-box;width:514px;margin:1px 0}nav div+div{width:565px}
.on{background:#fff;color:var(--green)}
.crumbs{height:40px;display:flex;align-items:center;padding-left:60px;font-size:13px;color:#333;border-bottom:1px solid var(--line)}
.crumbs span,.crumbs b{color:var(--green)}.crumbs span{margin:0 4px 0 6px}.crumbs b{margin-left:5px}
</style>
<div class="in"><div class="logo"><mis-icon name="eagle"></mis-icon><div class="flag"></div><div class="name"><fit-text w="91">Bundesamt für</fit-text><fit-text w="168">Kartographie und Geodäsie</fit-text></div></div>
<h1><fit-text w="333">MetadatenInformationsSystem</fit-text></h1><a><mis-icon name="user"></mis-icon><fit-text w="55">Anmelden</fit-text></a></div>
<nav><div class="on"><fit-text w="45">SUCHE</fit-text></div><div><fit-text w="96">ÜBER BKG-MIS</fit-text></div></nav>
<div class="crumbs"><fit-text w="67">Sie sind hier:</fit-text><span><fit-text w="50">Startseite</fit-text></span><mis-icon name="crumb"></mis-icon><b><fit-text w="33">Suche</fit-text></b></div>`);

define('search-bar', `<style>
:host{display:block;background:#eee;padding:40px 411px 0 412px;height:111px;border-bottom:2px solid var(--line)}
.box{background:#fff;height:111px;box-sizing:border-box;padding:30px 30px 30px 30px;display:flex}
.f{flex:1;border:1px solid var(--green);border-right:0;color:#999;font-size:16px;display:flex;align-items:center;padding-left:15px}
.b{width:161px;background:var(--green);color:#fff;font:700 19px Roboto,sans-serif;display:flex;align-items:center;justify-content:center}
</style><div class="box"><div class="f"><fit-text w="138">Suchbegriff eingeben</fit-text></div><div class="b"><fit-text w="49">Suche</fit-text></div></div>`);

/* ---------- sidebar ---------- */
define('facet-group', `<style>
:host{display:block}
.h{height:77px;box-sizing:border-box;border-bottom:1px solid var(--line);display:flex;align-items:flex-end;justify-content:space-between;padding:0 8px 13px 0;font:700 17px/21px Roboto,sans-serif;color:#000}
:host([first]) .h{height:47px}
mis-icon{margin-bottom:5px}
</style><div class="h"><slot name="title"></slot><mis-icon name="up"></mis-icon></div><slot></slot>`);
define('facet-item', `<style>
:host{display:flex;box-sizing:border-box;height:47.400px;border-bottom:1px solid var(--line);align-items:center;padding-left:3px;gap:6px;font-size:13px;color:#000}
mis-icon{margin-bottom:2px}
</style><mis-icon name="tr"></mis-icon><slot></slot>`, (el, r) => {
  if (el.hasAttribute('active')) { const i = r.querySelector('mis-icon'); const n = document.createElement('mis-icon'); n.setAttribute('name', 'tl'); i.replaceWith(n); }
});
define('facet-bar', `<style>
:host{display:block;width:248px;padding-top:61px;border-right:1px solid var(--line);flex:none}
.r{display:flex;justify-content:flex-end;align-items:center;gap:4px;height:20px;padding-right:9px;font-size:13px;color:var(--green)}
</style><div class="r"><mis-icon name="reset"></mis-icon><fit-text w="158">Alle Einschränkungen löschen</fit-text></div>
<facet-group first><fit-text slot="title" w="130">Art der Ressource</fit-text><facet-item active><fit-text w="105"><b>Geodatensatz (56)</b></fit-text></facet-item></facet-group>
<facet-group><fit-text slot="title" w="59">INSPIRE</fit-text><facet-item><fit-text w="29">Ja <b>(3)</b></fit-text></facet-item><facet-item><fit-text w="52">Nein <b>(53)</b></fit-text></facet-item></facet-group>
<facet-group><fit-text slot="title" w="68">Opendata</fit-text><facet-item><fit-text w="36">Ja <b>(30)</b></fit-text></facet-item><facet-item><fit-text w="52">Nein <b>(26)</b></fit-text></facet-item></facet-group>
<facet-group><fit-text slot="title" w="92">AdV-Produkt</fit-text><facet-item><fit-text w="36">Ja <b>(12)</b></fit-text></facet-item><facet-item><fit-text w="52">Nein <b>(44)</b></fit-text></facet-item></facet-group>`);

/* ---------- results ---------- */
define('result-item', `<style>
:host{display:flow-root;border-bottom:1px solid var(--line)}
.h{height:68px;box-sizing:border-box;padding-top:31px;display:flex;gap:9px;color:var(--green);font-size:18px;font-weight:700;line-height:26px}
.h mis-icon{margin-top:2px}
::slotted([slot=media]){float:right}
.t{padding-top:6px;line-height:25.500px}
::slotted(fit-text.l){display:flow-root}
.x{display:flex;align-items:center;width:58px;height:31px;box-sizing:border-box;padding:0 0 2px 14px;background:#eee;color:var(--green);margin:18px 0 17px}
</style><div class="h"><mis-icon name="globe"></mis-icon><slot name="title"></slot></div><slot name="media"></slot><div class="t"><slot></slot></div><div class="x"><fit-text w="30">XML</fit-text></div>`);
const RESULTS = [
['TopPlusOpen',112.5,'top',237,['Weltweite einheitliche Webkarte. Die Webkarte TopPlusOpen (TPO) verfügt',491],['über 18 vordefinierte Detaillierungsstufen von der weltweiten Übersichtskarte',507],['bis hin zur detaillierten Stadtkarte in Deutschland. Das Produkt liegt standard-',508.5],['mäßig in der weitverbreiteten Web Mercator Projektion (EPSG:3857) vor. Über',507],['die WMS-Schnittstelle kann die Webkarte allerdings auch in weiteren gängigen',512],['Projektionen...',94]],
['Verwaltungsgebiete 1:250 000 mit Einwohnerzahlen - Stand 31.12.',549,'vg',167,['nach Bundesland von 1:5 000 bis 1:200 000. Die Fortführung der Daten erfolgt',507],['anhand',48]],
['Verwaltungszuordnung 1:250 000 - Stand 01.01.',396,'de',237,['Verwaltungseinheiten und zugehörigen NUTS-Regionen zum 1. Januar. Die',486],['hierarchische Struktur',144]],
['Verwaltungszuordnung 1:250 000 - Stand 31.12.',396,'de',237,['Der Datenbestand umfasst die Gemeinden der Bundesrepublik Deutschland',492],['mit den übergeordneten Verwaltungseinheiten und zugehörigen NUTS-',465.5],['Regionen zum 31. Dezember. Die hierarchische Struktur der Verwaltungsebe-',500.5],['nen wird durch den Regionalschlüssel (RS) wiedergegeben. Der RS ist ein',471],['Schlüssel der Erzeugnisse der statistischen Ämter des Bundes und der Länder.',504],['Die Integration von statistischen...',222]],
['Digitales Landschaftsmodell 1:1 000 000',335,'dlm1000',134,['sich hinsichtlich Inhalt und Erfassungsgenauigkeit an der Übersichtskarte',475.5],['1:500.000.',67]],
['Digitales Landschaftsmodell 1:250 000',320.5,'dlm250',133,['. Der Informationsumfang des DLM250 orientiert sich am Inhalt der Topogra-',503],['phischen Karte 1 : 250 000',172]],
['Digitales Geländemodell Gitterweite 200 m',359,'',24,['Zur einheitlichen Beschreibung des Reliefs des Gebietes der Bundesrepublik Deutschland werden im Rahmen',708],['des ATKIS-Projekts durch die deutsche Landesvermessung folgende Digitale Geländemodelle (DGM) unterschiedlicher',770],['Qualitätsstufen aufgebaut: Digitales Geländemodell 5 - DGM5; Digitales Geländemodell 25 - DGM25; Digitales Gelände-',781.5],['modell 50 - DGM50; Digitales Geländemodell 200 - DGM200 und Digitales...',495]],
['Landbedeckungsmodell für Deutschland (LBM-DE) 2018',468.5,'lbm',185,['Das Landbedeckungsmodell Deutschland (LBM-DE) besitzt eine detaillierten',498],['Gliederung in Landbedeckung (LB) und Landnutzung (LN) bei einer Mindest-',496],['kartierfläche von 1ha. Aus den Kombinationen von LB und LN werden eindeu-',504.5],['tige CORINE LandCover-Klassen abgeleitet ("CLC").',334]],
['Landbedeckungsmodell für Deutschland (LBM-DE) 2015',468.5,'lbm',186,['Das Landbedeckungsmodell Deutschland (LBM-DE) besitzt eine detaillierten',498],['Gliederung in Landbedeckung (LB) und Landnutzung (LN) auf Mindestgröße',492],['von 1ha. Aus den Kombinationen von LB und LN werden eindeutige CORINE',497],['LandCover-Klassen abgeleitet ("CLC").',246]],
['NUTS-Gebiete 1:250 000 - Stand 31.12.',322,'',24,['Der Datenbestand umfasst für das Gebiet der Bundesrepublik Deutschland zum 31. Dezember die Regionen der',723],['Systematik der Gebietseinheiten (NUTS - Nomenclature des unités territoriales statistiques) für Zwecke der europäischen',784],['Statistik des Statistischen Amtes der Europäischen Union (EUROSTAT) gemäß Verordnung (EG) Nr. 1059 / 2003 des Euro-',786],['päischen Parlaments und des Rates vom 26. Mai 2003, in der...',401]]
];
define('page-nav', `<style>
:host{display:flex;margin-top:50px;height:83px;border:solid var(--line);border-width:1px 0;color:#222}
b{font-size:22px;line-height:30px;padding-top:31px;width:331px}
.c{display:flex;justify-content:center;padding-top:30px}
.p{width:39.400px;display:flex;flex-direction:column;align-items:center;font-weight:700;font-size:14px;line-height:20px;padding-top:27px;color:#999}
.p i{width:36px;height:4px;background:var(--green);margin-top:12px}
.on{color:var(--green)}
</style><b><fit-text w="227">1 - 10 von 56 Einträgen</fit-text></b>
<div class="c" style="width:40px"><mis-icon name="first"></mis-icon></div><div class="c" style="width:64px;margin-right:25.500px"><mis-icon name="prev"></mis-icon></div>
<div class="p on">1<i></i></div><div class="p">2</div><div class="p">3</div><div class="p">4</div><div class="p">5</div>
<div class="c" style="width:52px;margin-left:32px"><mis-icon name="next"></mis-icon></div><div class="c" style="width:50px"><mis-icon name="last"></mis-icon></div>`);
define('result-list', `<style>
:host{display:block;width:791px;margin-left:40px;padding:90px 0 110px}
.chip{display:flex;align-items:center;width:253px;height:38px;box-sizing:border-box;padding-left:14px;gap:4px;background:#eee;color:#666}
.chip mis-icon{margin-top:1px}
h2{margin:48px 0 0;font-size:22px;line-height:30px;padding-bottom:23px;border-bottom:1px solid var(--line);color:#222}
</style><div class="chip"><mis-icon name="x"></mis-icon><fit-text w="211">Art der Ressource: Geodatensatz</fit-text></div>
<h2><fit-text w="136.500">56 Ergebnisse</fit-text></h2><section></section><page-nav></page-nav>`, (el, r) => {
  r.querySelector('section').innerHTML = RESULTS.map(([t, w, k, h, ...ls]) => `<result-item><fit-text slot="title" w="${w}">${t}</fit-text>${k ? `<map-thumb slot="media" kind="${k}" height="${h}"></map-thumb>` : '<mis-icon slot="media" name="broken"></mis-icon>'}${ls.map(([s, lw]) => `<fit-text class="l" w="${lw}">${s}</fit-text>`).join('')}</result-item>`).join('');
});

/* ---------- footer ---------- */
define('mis-footer', `<style>
:host{display:block}
.tools{height:75px;box-sizing:border-box;padding:11px 0 0 427px;display:flex;align-items:flex-start;line-height:20px;font-size:14px}
.tools mis-icon:nth-of-type(1){margin:5px 12px 0 10px}.tools mis-icon:nth-of-type(2){margin:5px 6px 0 20px}
.tools fit-text+mis-icon+fit-text{margin-top:1px}
.soc{height:48px;background:var(--green);color:#fff;font-size:12px;display:flex;align-items:center;padding-left:427px}
.soc div{width:210px;display:flex;align-items:center;gap:9px}
.soc div:nth-child(3){gap:12px}.soc div:nth-child(4){gap:11px}
.bot{display:flex;padding:49px 0 0 443px;height:78px}
.l{padding-left:64px;font-size:12.500px;line-height:20px;display:flex;flex-direction:column;gap:25px;margin-top:-7px}
.n{display:flex;gap:32px;font-weight:600}
.c{font-size:13px}
</style>
<div class="tools"><fit-text w="62">Diese Seite</fit-text><mis-icon name="print"></mis-icon><fit-text w="46">drucken</fit-text><mis-icon name="share"></mis-icon><fit-text w="60">empfehlen</fit-text></div>
<div class="soc"><div><mis-icon name="twitter"></mis-icon><fit-text w="46">TWITTER</fit-text></div><div><mis-icon name="xing"></mis-icon><fit-text w="25">XING</fit-text></div><div><mis-icon name="youtube"></mis-icon><fit-text w="48">YOUTUBE</fit-text></div><div><mis-icon name="rss"></mis-icon><fit-text w="17">RSS</fit-text></div></div>
<div class="bot"><mis-icon name="bkg"></mis-icon><div class="l"><div class="n"><fit-text w="52">KONTAKT</fit-text><fit-text w="65">IMPRESSUM</fit-text><fit-text w="80">DATENSCHUTZ</fit-text></div><div class="c"><fit-text w="254">© Bundesamt für Kartographie und Geodäsie - 2019</fit-text></div></div></div>`);

define('mis-page', `<style>:host{display:block;height:3699px;overflow:hidden}main{display:flex;padding-left:412px;height:3029px}</style>
<mis-header></mis-header><search-bar></search-bar><main><facet-bar></facet-bar><result-list></result-list></main><mis-footer></mis-footer>`);

/* fit-text: condenses its glyphs horizontally so that the run has the width w */
define('fit-text', `<style>:host{display:inline-block;white-space:nowrap;text-align:left}span{display:inline-block;transform-origin:0 50%}</style><span><slot></slot></span>`, (el, r) => {
  const s = r.querySelector('span'), w = +el.getAttribute('w'), n = s.getBoundingClientRect().width;
  if (!n) return;
  el.style.width = w + 'px';
  s.style.transform = `scaleX(${(w / n).toFixed(4)})`;
});
</script>
</body>
</html>
